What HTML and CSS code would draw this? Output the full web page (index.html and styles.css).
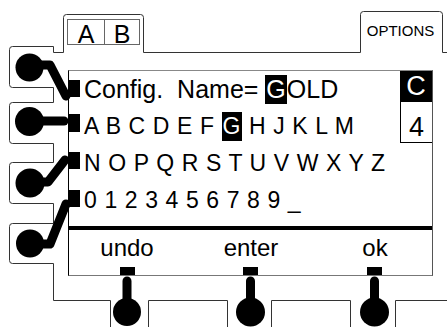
FILE: index.html
```html
<!DOCTYPE html>
<html lang="en">
<head>
<meta charset="utf-8">
<title>Config Name</title>
<link rel="stylesheet" href="styles.css">
</head>
<body>
<div class="device">
  <header class="tabs">
    <div class="ab"><span class="ab-cell">A</span><span class="ab-cell">B</span></div>
    <div class="options">OPTIONS</div>
  </header>
  <section class="screen">
    <div class="rows">
      <div class="row row-name">Config.  Name= <b class="hi">G</b>OLD</div>
      <div class="row">A B C D E F <b class="hi">G</b> H J K L M</div>
      <div class="row">N O P Q R S T U V W X Y Z</div>
      <div class="row">0 1 2 3 4 5 6 7 8 9 _</div>
    </div>
    <aside class="side">
      <div class="cell cell-dark">C</div>
      <div class="cell cell-light">4</div>
    </aside>
    <div class="rule"></div>
    <div class="keys">
      <span class="key">undo</span>
      <span class="key">enter</span>
      <span class="key">ok</span>
    </div>
  </section>
  <svg class="bezel" width="447" height="327" viewBox="0 0 447 327" aria-hidden="true">
    <path class="outline" d="M447,52.5 H442.5 V14.5 Q442.5,11.5 439.5,11.5 H363.5 Q360.5,11.5 360.5,14.5 V52.5 H143.5 V17.5 Q143.5,14.5 140.5,14.5 H66.5 Q63.5,14.5 63.5,17.5 V52.5 H53.5 V46.5 H12.5 Q9.5,46.5 9.5,49.5 V84.5 Q9.5,87.5 12.5,87.5 H53.5 V102.5 H12.5 Q9.5,102.5 9.5,105.5 V140.5 Q9.5,143.5 12.5,143.5 H53.5 V162.5 H12.5 Q9.5,162.5 9.5,165.5 V200.5 Q9.5,203.5 12.5,203.5 H53.5 V223.5 H12.5 Q9.5,223.5 9.5,226.5 V260.5 Q9.5,263.5 12.5,263.5 H53.5 V300.5 H110.5 V327"/>
    <path class="outline" d="M148.5,327 V300.5 H227.5 V327 M271.5,327 V300.5 H350.5 V327 M395.5,327 V300.5 H447"/>
    <rect class="mark" x="68" y="80" width="12" height="17"/>
    <rect class="mark" x="68" y="114" width="12" height="18"/>
    <rect class="mark" x="68" y="152" width="12" height="17"/>
    <rect class="mark" x="68" y="190" width="12" height="17"/>
    <path class="link" d="M29,65 H50 L66,96"/>
    <path class="link" d="M29,121 H64"/>
    <path class="link" d="M30,182 H48 L65,160"/>
    <path class="link" d="M30,244 H50 L66,204"/>
    <circle class="knob" cx="29.5" cy="67.5" r="14"/>
    <circle class="knob" cx="29.5" cy="121.5" r="14.5"/>
    <circle class="knob" cx="30" cy="183" r="14.5"/>
    <circle class="knob" cx="30" cy="243.5" r="14"/>
    <rect class="mark" x="120" y="267" width="15" height="8"/>
    <rect class="mark" x="243" y="267" width="15" height="8"/>
    <rect class="mark" x="367" y="267" width="15" height="8"/>
    <path class="link" d="M127,281 V305 M250.5,281 V305 M374.5,281 V305"/>
    <circle class="knob" cx="127" cy="312" r="14"/>
    <circle class="knob" cx="250.5" cy="312" r="14.5"/>
    <circle class="knob" cx="374.5" cy="312" r="14.5"/>
  </svg>
</div>
</body>
</html>
```
FILE: styles.css
```css
html, body {
  margin: 0;
  padding: 0;
  background: #fff;
}

body {
  font-family: "Liberation Sans", Arial, sans-serif;
  color: #000;
}

.device {
  position: relative;
  width: 447px;
  height: 327px;
  overflow: hidden;
  background: #fff;
}

.tabs {
  display: flex;
  align-items: flex-start;
  height: 70px;
}

.ab {
  display: flex;
  margin: 19px 0 0 67px;
  width: 73px;
  height: 26px;
  box-sizing: border-box;
  border: 1px solid #666;
}

.ab-cell {
  height: 24px;
  line-height: 28px;
  font-size: 25px;
  text-align: center;
}

.ab-cell:first-child {
  width: 36px;
  border-right: 1px solid #666;
}

.ab-cell:last-child {
  flex: 1;
}

.options {
  margin: 11px 5px 0 auto;
  width: 83px;
  padding-top: 12px;
  line-height: 15px;
  font-size: 15px;
  text-align: center;
}

.screen {
  margin-left: 68px;
  width: 365px;
  height: 206px;
  box-sizing: border-box;
  border: 1px solid;
  border-color: #888 #555 #777 #000;
  display: grid;
  grid-template-columns: 1fr 32px;
  grid-template-rows: 155px 4px 1fr;
}

.rows {
  grid-column: 1;
  grid-row: 1;
  padding-left: 15px;
}

.row {
  height: 37px;
  line-height: 37px;
  font-size: 23px;
  letter-spacing: 0.6px;
  white-space: pre;
}

.row-name {
  font-size: 25px;
  letter-spacing: 0;
}

.hi {
  display: inline-block;
  font-weight: normal;
  background: #000;
  color: #fff;
  line-height: 29px;
  padding: 0 1px;
}

.side {
  grid-column: 2;
  grid-row: 1;
  display: flex;
  flex-direction: column;
  align-items: stretch;
}

.cell {
  font-size: 27px;
  text-align: center;
}

.cell-dark {
  height: 31px;
  line-height: 31px;
  background: #000;
  color: #fff;
}

.cell-light {
  height: 30px;
  line-height: 30px;
  padding-top: 10px;
  border-left: 1px solid #000;
  border-bottom: 1px solid #000;
}

.rule {
  grid-column: 1 / -1;
  grid-row: 2;
  background: #000;
}

.keys {
  grid-column: 1 / -1;
  grid-row: 3;
  display: grid;
  grid-template-columns: 80px 80px 80px;
  column-gap: 44px;
  padding-left: 18px;
  padding-top: 6px;
  font-size: 24px;
  line-height: 24px;
}

.key {
  text-align: center;
}

.bezel {
  position: absolute;
  left: 0;
  top: 0;
  pointer-events: none;
}

.outline {
  fill: none;
  stroke: #333;
  stroke-width: 1;
}

.mark {
  fill: #000;
}

.knob {
  fill: #000;
}

.link {
  fill: none;
  stroke: #000;
  stroke-width: 9;
  stroke-linecap: round;
  stroke-linejoin: round;
}
```
